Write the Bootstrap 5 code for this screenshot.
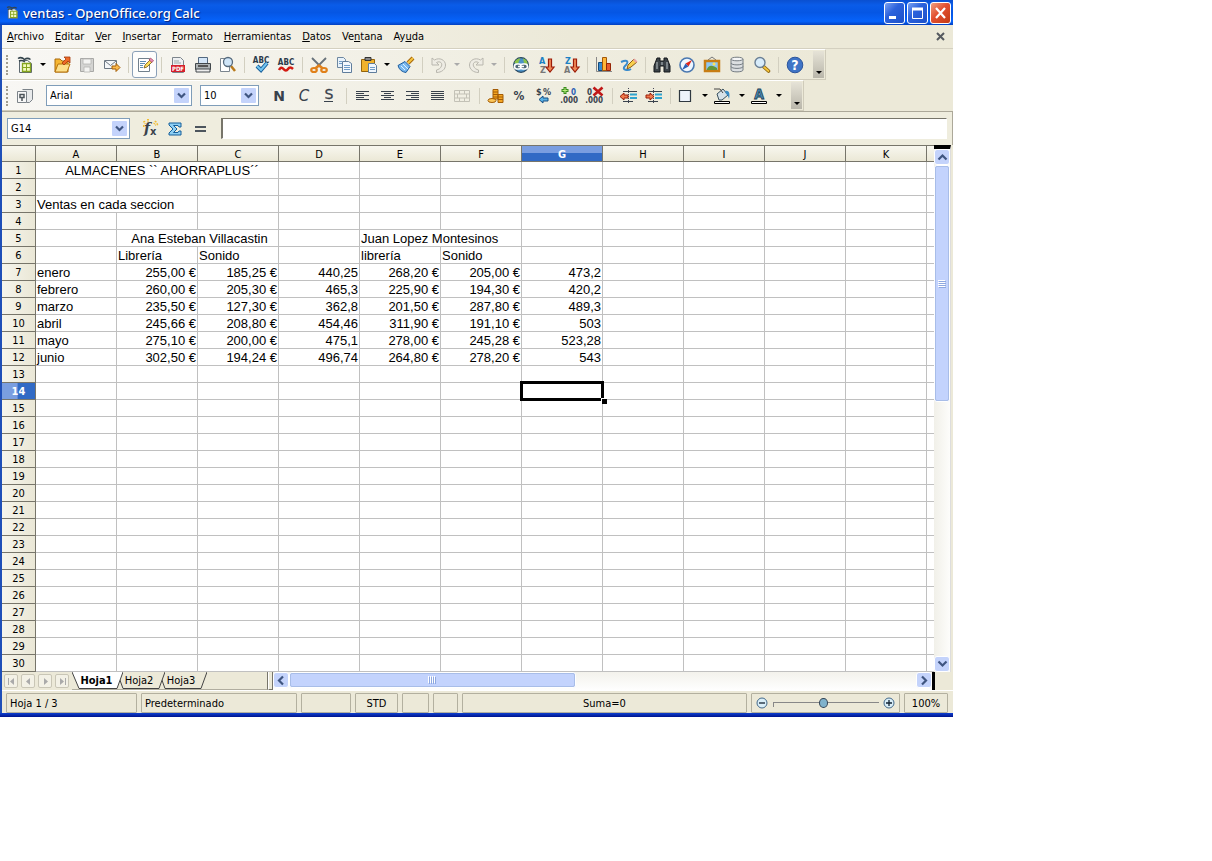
<!DOCTYPE html>
<html lang="es">
<head>
<meta charset="utf-8">
<meta name="viewport" content="width=device-width, initial-scale=1">
<title>ventas - OpenOffice.org Calc</title>
<link href="https://cdn.jsdelivr.net/npm/bootstrap@5.3.0/dist/css/bootstrap.min.css" rel="stylesheet">
<style>
:root{--face:#ece9d8;--ui:"DejaVu Sans Condensed","DejaVu Sans",sans-serif}
body{background:#fff;font-family:var(--ui);font-size:11px;line-height:16px;color:#000}
button,input,select{font:inherit;color:inherit}
button{background:none;border:0;padding:0}
.app{width:calc(100% - 259px);background:var(--face);border-left:2px solid #1f4fb8}
.titlebar{height:25px;margin-left:-2px;padding:0 2px 0 4px;background:linear-gradient(#0a4fd0,#0a5ce8 20%,#0556e4 50%,#0663fb 85%,#0340c0);color:#fff}
.titlebar h1{font:500 13px/24px "Noto Sans","Open Sans",sans-serif;text-shadow:1px 1px 1px #0a1f70;margin:0 0 0 2px}
.winbtns{gap:2px}
.winbtn{width:21px;height:22px;border:1px solid #fff;border-radius:3px;background:linear-gradient(135deg,#7ba2f3,#2c62dc 40%,#1c50c8)}
.winbtn.close-win{background:linear-gradient(135deg,#f0a080,#e25030 45%,#c33a14)}
.winbtn svg{display:block}
.menubar{height:24px;background:linear-gradient(90deg,#f8f7f3,var(--face) 60%);border-bottom:1px solid #d4d0c0;padding:0 6px 0 5px}
.menubar a{color:#000;text-decoration:none}
.menubar u{text-underline-offset:1px}
.menu-items{gap:11px}
.tools{height:31px;width:max-content;background:linear-gradient(90deg,#f8f7f4,#f0eee2 60%,var(--face));border-right:1px solid #cfcbba;border-bottom:1px solid #cfcbba;border-top:1px solid #fff}
.grip{width:10px;height:20px;border-left:2px dotted #a09d90;margin-left:4px;margin-right:-4px}
.tb{width:25px;height:27px;display:flex;align-items:center;justify-content:center;flex:none}
.tb svg{width:22px;height:22px;display:block}
.tb.on{border:1px solid #8aa0b8;border-radius:3px;background:#fdfdfc}
.dd{width:12px;height:27px;display:flex;align-items:center;justify-content:center;flex:none}
.dd::after,.more::after{content:"";border:3px solid transparent;border-top-color:#000;border-bottom:0}
.dd:disabled::after{border-top-color:#aaa}
.sep{width:8px;height:16px;flex:none;background:linear-gradient(#d2cfc0,#d2cfc0) 4px 0/1px 100% no-repeat}
.more{width:11px;height:27px;margin-left:6px;margin-right:1px;background:linear-gradient(#e6e3d7,#b9b6aa);display:flex;align-items:end;justify-content:center;padding-bottom:4px}
.pick{position:relative;height:21px;background:#fff;border:1px solid #7f9db9}
.pick select,.pick input{appearance:none;width:100%;height:19px;border:0;background:transparent;padding:0 20px 0 3px;outline:0;display:block}
.pick svg{position:absolute;right:2px;top:2px;pointer-events:none}
.fontpick{width:146px;margin-left:9px}.sizepick{width:59px;margin:0 8px}.cellpick{width:123px;margin-right:8px}
.formula{height:34px;padding:0 5px;border-top:1px solid #aca899;background:#efedde;border-right:1px solid #aca899}
.entry{height:21px;margin-left:8px;background:#fff;border:1px solid #fff;border-top:1px solid #77756a;border-left:2px solid #77756a;outline:0;min-width:0}
.grid{table-layout:fixed;width:100%;border-collapse:separate;border-spacing:0;background:#fff}
.grid th{font-weight:400;text-align:center;background:linear-gradient(#f8f7ef,#ebe8d6);border-right:1px solid #77756a;border-bottom:1px solid #77756a;height:17px}
.grid thead th{border-top:1px solid #77756a;line-height:13px;padding:2px 0 0}
.grid tbody th{background:linear-gradient(90deg,#f6f5ec,#eae7d6);line-height:14px;padding:2px 0 0}
.grid thead th.cur{background:linear-gradient(#7a9ee0 50%,#316ac5 50%);color:#fff;font-weight:700}
.grid tbody th.cur{background:linear-gradient(90deg,#7a9ee0 45%,#316ac5 50%);color:#fff;font-weight:700}
.grid td{font:13px/14px "Liberation Sans",Arial,sans-serif;height:17px;padding:2px 1px 0;border-right:1px solid #c0c0c0;border-bottom:1px solid #c0c0c0;white-space:nowrap}
.grid tr>:last-child{border-right:0}
.grid .ps-heading{padding-left:11px}.grid .ps-name{padding-left:5px}
.c-head{width:34px}.c-data{width:81px}
.cursor{position:relative}
.cursor::before{content:"";position:absolute;inset:-2px;border:3px solid #000}
.cursor::after{content:"";position:absolute;right:-5px;bottom:-5px;width:6px;height:6px;background:#000;border:solid #fff;border-width:1px 0 0 1px}
.vscroll{width:17px;background:linear-gradient(90deg,#f1f0e9,#fdfdfb);border-top:4px solid #000;border-right:1px solid #ddd;margin-right:2px}
.arrow{width:16px;height:16px;flex:none;border:1px solid #fff;border-radius:3px;background:#c4d3fb;display:flex;align-items:center;justify-content:center}
.thumb{border:1px solid #fff;outline:1px solid #a8bde8;outline-offset:-2px;border-radius:3px;background:#c3d3fd;display:flex;align-items:center;justify-content:center}
.vscroll .thumb{height:237px;width:16px}
.hscroll{background:linear-gradient(#f3f2ec,#fefefe)}
.hscroll .thumb{width:43.5%;height:16px}
.strip{height:18px}
.navs{width:70px;padding:2px 0 0 2px;gap:3px}
.stop{width:21px;border-left:3px solid #000;flex:none}
.nb{width:14px;height:14px;border:1px solid #c9c6b6;border-radius:2px;background:#f3f1e6;display:flex;align-items:center;justify-content:center}
.sheets{width:196px;border-right:1px solid #77756a;border-bottom:1px solid #b0ad9f}
.sheet{position:relative;width:48px;height:17px;margin-right:-6px;line-height:17px;padding-right:4px;flex:none}
.sheet svg{position:absolute;left:0;top:0;width:100%;height:17px}
.sheet span{position:relative}
.sheet:first-child{width:51px;font-weight:700;z-index:3;padding-right:2px}
.sheet:nth-child(2){z-index:2}
.splitter{width:5px;border:1px solid #77756a;border-top:0;border-left-color:#fff;background:var(--face)}
.statusbar{height:23px;padding:2px 5px 0 4px;gap:4px;border-top:1px solid #fff}
.field{height:20px;border:1px solid #b3b09f;border-radius:1px;padding:1px 3px 0;line-height:18px;white-space:nowrap;flex:none}
.w131{width:131px}.w156{width:156px}.w50{width:50px}.w43{width:43px}.w27{width:27px}.w25{width:25px}.w149{width:149px}.w44{width:44px}
.zoom{appearance:none;height:12px;min-width:0;width:106px;background:linear-gradient(#888,#888) 0 5px/100% 1px no-repeat,linear-gradient(#888,#888) 0 5px/1px 5px no-repeat}
.zoom::-webkit-slider-thumb{appearance:none;width:9px;height:10px;border-radius:50%;border:1px solid #345;background:#7fb2cc}
.bottom-edge{height:4px;margin-left:-2px;background:linear-gradient(#0d3fd0,#00138c)}
.t{font-family:var(--ui);font-weight:700}
</style>
</head>
<body>
<svg width="0" height="0" class="position-absolute" aria-hidden="true">
<defs>
<symbol id="chev" viewBox="0 0 15 15"><rect width="15" height="15" rx="1" fill="#c4d3fb"/><path d="M4 5.500 7.500 9 11 5.500" fill="none" stroke="#3f5580" stroke-width="2.200"/></symbol>
<symbol id="calc" viewBox="0 0 22 22"><path d="M5.500 6.500h8l4 3v9h-12z" fill="#f4f6f6" stroke="#5d6870"/><path d="M4 4.500c3-2 5-.5 6.500 1 2-1.500 4-1.500 6 0M5 7c2-1 4-.5 6 1" fill="none" stroke="#34444c" stroke-width="1.500"/><path d="M8.500 9.500h8v8h-8z" fill="#f3fac0" stroke="#86a51f" stroke-width="1.300"/><path d="M8.500 13.500h8M12.500 9.500v8" stroke="#86a51f"/></symbol>
<symbol id="glass" viewBox="0 0 22 22"><path d="m13 13 4.500 4" stroke="#8b6510" stroke-width="3.600" stroke-linecap="round"/><path d="m13 13 4.500 4" stroke="#f4c33c" stroke-width="1.800" stroke-linecap="round"/><circle cx="9" cy="8.500" r="5" fill="#d8ecfb" stroke="#6a7f95" stroke-width="1.400"/></symbol>
<symbol id="undo" viewBox="0 0 22 22"><path d="M4 4v7h7L8.500 8.500c4-2 6 1 5 3.500s-3 3.500-5 4v2.500c5 0 9-3 9-7.500 0-5-6-8-11-5z" fill="#eeece4" stroke="#b9b7ae"/></symbol>
<symbol id="indent" viewBox="0 0 22 22"><path d="M10.500 3v16" stroke="#445" stroke-dasharray="1 1"/><path d="M5 6.500h14M5 16.500h10" stroke="#39424c"/><path d="M12 9.500h7M12 13h7" stroke="#2fa4cf" stroke-width="2"/></symbol>
<symbol id="down" viewBox="0 0 22 22"><path d="M13.500 5h3v8H19l-4 5-4-5h2.500z" fill="#f08a58" stroke="#9c1c08" stroke-width="1.200"/></symbol>
</defs>
</svg>

<main class="app">
<header class="titlebar d-flex align-items-center">
  <svg width="17" height="17"><use href="#calc"/></svg>
  <h1 class="flex-grow-1">ventas - OpenOffice.org Calc</h1>
  <div class="winbtns d-flex">
    <button class="winbtn" aria-label="Minimizar"><svg width="19" height="20"><path d="M4 14.500h7" stroke="#fff" stroke-width="3"/></svg></button>
    <button class="winbtn" aria-label="Maximizar"><svg width="19" height="20"><path d="M4.500 6v9.500h10V6" fill="none" stroke="#fff"/><path d="M4 6h11" stroke="#fff" stroke-width="3"/></svg></button>
    <button class="winbtn close-win" aria-label="Cerrar"><svg width="19" height="20"><path d="m5 5 9 10M14 5 5 15" stroke="#fff" stroke-width="2.200"/></svg></button>
  </div>
</header>

<nav class="menubar d-flex align-items-center" aria-label="Menú">
  <div class="d-flex flex-grow-1 menu-items">
  <a href="#"><u>A</u>rchivo</a><a href="#"><u>E</u>ditar</a><a href="#"><u>V</u>er</a><a href="#"><u>I</u>nsertar</a><a href="#"><u>F</u>ormato</a><a href="#"><u>H</u>erramientas</a><a href="#"><u>D</u>atos</a><a href="#">Ve<u>n</u>tana</a><a href="#">Ay<u>u</u>da</a>
  </div>
  <button aria-label="Cerrar documento"><svg width="12" height="12" class="d-block"><path d="m2 2 7 7M9 2 2 9" stroke="#55595f" stroke-width="2"/></svg></button>
</nav>

<div class="tools d-flex align-items-center" role="toolbar" aria-label="Estándar">
  <span class="grip"></span>
  <button class="tb" aria-label="Nuevo"><svg><use href="#calc"/></svg></button><button class="dd" aria-label="Tipos"></button>
  <button class="tb" aria-label="Abrir"><svg viewBox="0 0 22 22"><path d="M4 18V5h5l2 2h6v11z" fill="#f7b733" stroke="#a8690a"/><path d="m4 18 3-8h12l-3 8z" fill="#fde08a" stroke="#b8740e"/><path d="M13 3h6v6l-2-2-4 4-2-2 4-4z" fill="#ee6a28" stroke="#a33a0a" stroke-width=".8"/></svg></button>
  <button class="tb" aria-label="Guardar" disabled><svg viewBox="0 0 22 22"><path d="M4.500 4.500h13v13h-13z" fill="#d4d4d2" stroke="#a8a8a6"/><path d="M7 5h8v5H7zM8 13h6v5H8z" fill="#f4f4f2" stroke="#b5b5b3" stroke-width=".8"/></svg></button>
  <button class="tb" aria-label="Correo"><svg viewBox="0 0 22 22"><path d="M3.500 6.500h12v8h-12z" fill="#f4f6f8" stroke="#6c7782"/><path d="m4 7 5.500 4.500L15 7" fill="none" stroke="#6c7782"/><path d="M11 12h4v-2.500l4 4-4 4V15h-4z" fill="#fbb94b" stroke="#a35d06"/></svg></button>
  <span class="sep"></span>
  <button class="tb on" aria-label="Editar archivo"><svg viewBox="0 0 22 22"><path d="M4.500 4.500h11v13h-11z" fill="#fff" stroke="#71808c"/><path d="M6 7.500h6M6 9.500h5M6 11.500h3M6 13.500h3" stroke="#5c8cb5"/><path d="m10 14 1-3 5-5 2 2-5 5z" fill="#f9dd59" stroke="#77551c" stroke-width=".8"/><path d="m15 6 1.500-2 3 2.500L18 8.500z" fill="#e58cb8" stroke="#934" stroke-width=".6"/></svg></button>
  <span class="sep"></span>
  <button class="tb" aria-label="Exportar PDF"><svg viewBox="0 0 22 22"><path d="M5.500 3.500h8l3 3v12h-11z" fill="#eef0f2" stroke="#7d858c"/><path d="M7 7h5M7 9h7" stroke="#9aa"/><path d="M4 11h14v7H4z" fill="#d6202c"/><text x="11" y="17" font-size="6" class="t" text-anchor="middle" fill="#fff">PDF</text></svg></button>
  <button class="tb" aria-label="Imprimir"><svg viewBox="0 0 22 22"><path d="M6.500 3.500h9v6h-9z" fill="#d4e6f8" stroke="#536880"/><path d="M3.500 9.500h15v6h-15z" fill="#aeb4b6" stroke="#42484c"/><path d="M4 15h14v3H4z" fill="#eee" stroke="#42484c"/><path d="M6 12h10" stroke="#555" stroke-width="2"/></svg></button>
  <button class="tb" aria-label="Vista preliminar"><svg viewBox="0 0 22 22"><path d="M3.500 4.500h9v13h-9z" fill="#fff" stroke="#7b858e"/><path d="m14 12 4 5" stroke="#b97a1c" stroke-width="2.500"/><circle cx="11" cy="8" r="4.500" fill="#cfe5f8" stroke="#55697c" stroke-width="1.300"/></svg></button>
  <span class="sep"></span>
  <button class="tb" aria-label="Ortografía"><svg viewBox="0 0 22 22"><text x="11" y="9" font-size="8" class="t" text-anchor="middle" fill="#2b3b4b">ABC</text><path d="m7 12 4 4 6-7" fill="none" stroke="#195f9b" stroke-width="4"/><path d="m7 12 4 4 6-7" fill="none" stroke="#72c6f2" stroke-width="2"/></svg></button>
  <button class="tb" aria-label="Revisión automática"><svg viewBox="0 0 22 22"><text x="11" y="11" font-size="8" class="t" text-anchor="middle" fill="#2b3b4b">ABC</text><path d="M4 16q2-4 4.500-1t4.500 0 5 0" fill="none" stroke="#d31b12" stroke-width="2.500"/></svg></button>
  <span class="sep"></span>
  <button class="tb" aria-label="Cortar"><svg viewBox="0 0 22 22"><path d="m4 4 9 9M18 4l-9 9" stroke="#68727a" stroke-width="1.800"/><ellipse cx="6" cy="16" rx="2.800" ry="2" fill="none" stroke="#e0801a" stroke-width="2.200"/><ellipse cx="16" cy="16" rx="2.800" ry="2" fill="none" stroke="#e0801a" stroke-width="2.200"/><path d="m7 14.500 4-3 4 3" fill="none" stroke="#e0801a" stroke-width="2.400"/></svg></button>
  <button class="tb" aria-label="Copiar"><svg viewBox="0 0 22 22"><path d="M4.500 3.500h6l2 2v8h-8z" fill="#e8f2fb" stroke="#6d87a0"/><path d="M9.500 7.500h6l3 2v9h-9z" fill="#f3f8fd" stroke="#5f7d9c"/><path d="M6 7.500h3M6 9.500h3M11 11.500h6M11 13.500h6M11 15.500h6" stroke="#6f9cc8"/></svg></button>
  <button class="tb" aria-label="Pegar"><svg viewBox="0 0 22 22"><path d="M3.500 5.500h13v12h-13z" fill="#f0b22c" stroke="#94640b"/><path d="M7 3.500h6v3H7z" fill="#888" stroke="#333"/><path d="M10.500 9.500h6l2 2v7h-8z" fill="#eff6fd" stroke="#5f7d9c"/><path d="M12 13.500h5M12 15.500h5" stroke="#6f9cc8"/></svg></button><button class="dd" aria-label="Opciones de pegado"></button>
  <button class="tb" aria-label="Pincel de formato"><svg viewBox="0 0 22 22"><path d="m13 9 5-5" stroke="#a8690a" stroke-width="4"/><path d="m13 9 5-5" stroke="#f6c440" stroke-width="2"/><path d="m3 11.500 7-4 5 5-4 6c-4-.5-7-3-8-7z" fill="#7ab8ee" stroke="#1d5c9d"/><path d="m6 12 4 4M8 10l5 5" stroke="#dff1ff"/></svg></button>
  <span class="sep"></span>
  <button class="tb" aria-label="Deshacer" disabled><svg><use href="#undo"/></svg></button><button class="dd" aria-label="Lista deshacer" disabled></button>
  <button class="tb" aria-label="Restaurar" disabled><svg viewBox="0 0 22 22"><path d="M18 4v7h-7l2.500-2.500c-4-2-6 1-5 3.500s3 3.500 5 4v2.500c-5 0-9-3-9-7.500 0-5 6-8 11-5z" fill="#eeece4" stroke="#b9b7ae"/></svg></button><button class="dd" aria-label="Lista restaurar" disabled></button>
  <span class="sep"></span>
  <button class="tb" aria-label="Hiperenlace"><svg viewBox="0 0 22 22"><circle cx="11" cy="11" r="7.300" fill="#4c93c8" stroke="#28465e" stroke-width="1.300"/><path d="M4.500 9c0-3 4-5 6-4.500L9 7l-1 3zM13 4.500c3 .5 5 3 4.500 6L14 9z" fill="#8bc34a"/><rect x="4.500" y="10" width="7" height="5" rx="2.500" fill="#506878" stroke="#fff" stroke-width="1.600"/><rect x="10.500" y="10" width="7" height="5" rx="2.500" fill="#506878" stroke="#fff" stroke-width="1.600"/><path d="M8 12.500h6" stroke="#fff" stroke-width="1.500"/></svg></button>
  <button class="tb" aria-label="Orden ascendente"><svg viewBox="0 0 22 22"><text x="4" y="10" font-size="9" class="t" fill="#1c82c4">A</text><text x="5" y="19" font-size="9" class="t" fill="#777">Z</text><use href="#down"/></svg></button>
  <button class="tb" aria-label="Orden descendente"><svg viewBox="0 0 22 22"><text x="5" y="10" font-size="9" class="t" fill="#1c82c4">Z</text><text x="4" y="19" font-size="9" class="t" fill="#777">A</text><use href="#down"/></svg></button>
  <span class="sep"></span>
  <button class="tb" aria-label="Gráfico"><svg viewBox="0 0 22 22"><path d="M3.500 3v14.500H19" fill="none" stroke="#888"/><path d="M5.500 8.500h4v8h-4z" fill="#3689cf" stroke="#124a7c"/><path d="M9.500 3.500h4v13h-4z" fill="#ffb638" stroke="#a35808"/><path d="M13.500 9.500h4v7h-4z" fill="#e65a2c" stroke="#952506"/></svg></button>
  <button class="tb" aria-label="Dibujo"><svg viewBox="0 0 22 22"><path d="M3 8c7-3 8 0 4 4s3 5 6 3" fill="none" stroke="#3a8ccd" stroke-width="2"/><path d="m9 15 1-4 6-6 3 3-6 5z" fill="#f8cf4d" stroke="#8c5c15"/><path d="m15 6 1.500-1.500 3 3L18 9z" fill="#e9a2a2"/></svg></button>
  <span class="sep"></span>
  <button class="tb" aria-label="Buscar"><svg viewBox="0 0 22 22"><path d="M6 4h3v3h4V4h3l3 8v6h-6v-6H9v6H3v-6z" fill="#3b4247" stroke="#15191c"/><path d="M6 8v7M16 8v7M11 8v3" stroke="#939a9f" stroke-width="1.500"/></svg></button>
  <button class="tb" aria-label="Navegador"><svg viewBox="0 0 22 22"><circle cx="11" cy="11" r="7" fill="#eef6ff" stroke="#4a78b0" stroke-width="1.600"/><path d="m16 6-3.500 6.500-3-3z" fill="#e1261c"/><path d="m6 16 3.500-6.500 3 3z" fill="#2c5fb5"/></svg></button>
  <button class="tb" aria-label="Galería"><svg viewBox="0 0 22 22"><path d="m7 6 4-3 4 3" fill="none" stroke="#777"/><path d="M4 7h14v10H4z" fill="#8ec8f4" stroke="#c77d14" stroke-width="2.500"/><path d="M6 15c2-4 5-4 10-1v2H6z" fill="#63963a"/><circle cx="13" cy="10" r="1.500" fill="#ffe35a"/></svg></button>
  <button class="tb" aria-label="Orígenes de datos"><svg viewBox="0 0 22 22"><path d="M5 5v11c0 2.500 12 2.500 12 0V5" fill="#dcdfe1" stroke="#757c82"/><ellipse cx="11" cy="5" rx="6" ry="1.800" fill="#f5f6f7" stroke="#757c82"/><path d="M5 9c0 2.500 12 2.500 12 0M5 12.500c0 2.500 12 2.500 12 0" fill="none" stroke="#757c82"/></svg></button>
  <button class="tb" aria-label="Escala"><svg><use href="#glass"/></svg></button>
  <span class="sep"></span>
  <button class="tb" aria-label="Ayuda"><svg viewBox="0 0 22 22"><circle cx="11" cy="11" r="7.800" fill="#3f74c6" stroke="#2c559c"/><text x="11" y="16" font-size="14" class="t" text-anchor="middle" fill="#fff">?</text></svg></button>
  <button class="more" aria-label="Más botones"></button>
</div>

<div class="tools d-flex align-items-center" role="toolbar" aria-label="Formato">
  <span class="grip"></span>
  <button class="tb" aria-label="Estilo y formato"><svg viewBox="0 0 22 22"><path d="M8.500 4.500h10v10l-3 3h-3" fill="#e8eaeb" stroke="#7c8389"/><path d="M3.500 6.500h9v11h-9z" fill="#f8f8f8" stroke="#7c8389"/><path d="M6 9.500h4v3H6zM8 12v4" stroke="#4c545a" fill="none" stroke-width="1.500"/></svg></button>
  <div class="pick fontpick"><select aria-label="Fuente"><option>Arial</option></select><svg width="15" height="15"><use href="#chev"/></svg></div>
  <div class="pick sizepick"><select aria-label="Tamaño"><option>10</option></select><svg width="15" height="15"><use href="#chev"/></svg></div>
  <button class="tb" aria-label="Negrita"><svg viewBox="0 0 22 22"><text x="10" y="16" font-size="14" font-family="DejaVu Sans" font-weight="700" text-anchor="middle" fill="#39424c">N</text></svg></button>
  <button class="tb" aria-label="Cursiva"><svg viewBox="0 0 22 22"><text x="10" y="16" font-size="15" font-style="italic" text-anchor="middle" font-family="DejaVu Sans" fill="#39424c">C</text></svg></button>
  <button class="tb" aria-label="Subrayado"><svg viewBox="0 0 22 22"><text x="10" y="14" font-size="14" text-anchor="middle" font-family="DejaVu Sans" fill="#39424c" stroke="#39424c" stroke-width=".3">S</text><path d="M5 16.500h9" stroke="#39424c"/></svg></button>
  <span class="sep"></span>
  <button class="tb" aria-label="Izquierda"><svg viewBox="0 0 22 22"><path d="M4 6.500h13M4 8.500h8M4 10.500h13M4 12.500h8M4 14.500h13" stroke="#39424c"/></svg></button>
  <button class="tb" aria-label="Centrado"><svg viewBox="0 0 22 22"><path d="M4 6.500h13M7 8.500h7M4 10.500h13M7 12.500h7M4 14.500h13" stroke="#39424c"/></svg></button>
  <button class="tb" aria-label="Derecha"><svg viewBox="0 0 22 22"><path d="M4 6.500h13M9 8.500h8M4 10.500h13M9 12.500h8M4 14.500h13" stroke="#39424c"/></svg></button>
  <button class="tb" aria-label="Justificado"><svg viewBox="0 0 22 22"><path d="M4 6.500h13M4 8.500h13M4 10.500h13M4 12.500h13M4 14.500h13" stroke="#39424c"/></svg></button>
  <button class="tb" aria-label="Combinar celdas" disabled><svg viewBox="0 0 22 22"><path d="M2.500 5.500h15v11h-15zM2.500 9h15M2.500 13h15M7.500 5.500V9M12.500 5.500V9M5.500 9v4M14.500 9v4M7.500 13v3.500M12.500 13v3.500" fill="none" stroke="#c3c1b6"/></svg></button>
  <span class="sep"></span>
  <button class="tb" aria-label="Moneda"><svg viewBox="0 0 22 22"><path d="M8 4.500h5V14H8zM13 9.500h5v8h-5z" fill="#f5a623" stroke="#a35c06"/><path d="M8 7h5M8 9.500h5M8 12h5M13 12h5M13 14.500h5" stroke="#a35c06"/><ellipse cx="7" cy="15.500" rx="4" ry="2" fill="#fcc75a" stroke="#a35c06"/></svg></button>
  <button class="tb" aria-label="Porcentaje"><svg viewBox="0 0 22 22"><text x="9" y="15" font-size="12" class="t" text-anchor="middle" fill="#39424c">%</text></svg></button>
  <button class="tb" aria-label="Formato estándar"><svg viewBox="0 0 22 22"><text x="1" y="10" font-size="9" class="t" fill="#39424c">$</text><text x="8" y="10" font-size="9" class="t" fill="#39424c">%</text><path d="M4 14.500 8 11v2h5v3H8v2z" fill="#5ab2e6" stroke="#154f84"/></svg></button>
  <button class="tb" aria-label="Añadir decimal"><svg viewBox="0 0 22 22"><path d="M5 2v7M1.500 5.500h7" stroke="#3a8c1e" stroke-width="3"/><path d="M5 3v5M2.500 5.500h5" stroke="#b9f07c"/><text x="11" y="10" font-size="8" class="t" fill="#2c5fb5">0</text><text x="18" y="18" font-size="8" class="t" text-anchor="end" fill="#39424c">.000</text></svg></button>
  <button class="tb" aria-label="Quitar decimal"><svg viewBox="0 0 22 22"><text x="2" y="10" font-size="8" class="t" fill="#39424c">0</text><text x="18" y="18" font-size="8" class="t" text-anchor="end" fill="#39424c">.000</text><path d="m8.500 2.500 9 8M17.500 2.500l-9 8" stroke="#c01818" stroke-width="2.600"/></svg></button>
  <span class="sep"></span>
  <button class="tb" aria-label="Reducir sangría"><svg viewBox="0 0 22 22"><use href="#indent"/><path d="m2 11.500 4-3.500v2h4v3H6v2z" fill="#f07a4c" stroke="#9c1c08"/></svg></button>
  <button class="tb" aria-label="Aumentar sangría"><svg viewBox="0 0 22 22"><use href="#indent"/><path d="M11 11.500 7 8v2H3v3h4v2z" fill="#f07a4c" stroke="#9c1c08"/></svg></button>
  <span class="sep"></span>
  <button class="tb" aria-label="Borde"><svg viewBox="0 0 22 22"><path d="M3.500 5.500h11v11h-11z" fill="#eef3fa" stroke="#2f3840" stroke-width="1.200"/></svg></button><button class="dd" aria-label="Bordes"></button>
  <button class="tb" aria-label="Color de fondo"><svg viewBox="0 0 22 22"><path d="m4 9 6-5 5 6-6 5H6z" fill="#d6e2e8" stroke="#39505e"/><path d="M1 4h6l3 4" fill="none" stroke="#444"/><path d="M12 6c5-1 5 4 4 8-1-3-1-4-3-5z" fill="#3a8cc4"/><path d="M1.500 16.500h15v2h-15z" fill="#fff" stroke="#000"/></svg></button><button class="dd" aria-label="Colores de fondo"></button>
  <button class="tb" aria-label="Color de fuente"><svg viewBox="0 0 22 22"><text x="9" y="14" font-size="14" class="t" text-anchor="middle" fill="#4b8fb8" stroke="#1f3f58" stroke-width=".8">A</text><path d="M1.500 16.500h15v2h-15z" fill="#fff" stroke="#000"/></svg></button><button class="dd" aria-label="Colores de fuente"></button>
  <button class="more" aria-label="Más botones"></button>
</div>

<div class="formula d-flex align-items-center">
  <div class="pick cellpick"><input value="G14" aria-label="Celda"><svg width="15" height="15"><use href="#chev"/></svg></div>
  <button class="tb" aria-label="Asistente de funciones"><svg viewBox="0 0 22 22"><path d="m4 3 1 3M8 1v3M16 3l-2 3M18 6l-3 1M3 8h3" stroke="#f1bd35" stroke-width="2" stroke-dasharray="1.500 1"/><text x="4" y="15" font-size="14" font-style="italic" font-family="DejaVu Serif" font-weight="700" fill="#39424c">f</text><text x="10" y="17" font-size="11" class="t" fill="#39424c">x</text></svg></button>
  <button class="tb" aria-label="Suma"><svg viewBox="0 0 22 22"><path d="M4 5h12v4h-2l-1-1.500H8.500L12 11l-3.500 3.500H13l1-1.500h2v4H4v-2l4-4-4-4z" fill="#8fd0f4" stroke="#155f9a"/></svg></button>
  <button class="tb" aria-label="Función"><svg viewBox="0 0 22 22"><path d="M5 9h11M5 13h11" stroke="#4c555d" stroke-width="2"/></svg></button>
  <input class="entry flex-grow-1" aria-label="Línea de entrada">
</div>

<div class="d-flex">
  <div class="flex-grow-1 overflow-hidden">
    <table class="grid"><colgroup id="cols"></colgroup><thead id="head"></thead><tbody id="rows"></tbody></table>
  </div>
  <div class="vscroll d-flex flex-column">
    <button class="arrow" aria-label="Subir"><svg width="11" height="8"><path d="M1.500 6.500 5.500 2.500l4 4" fill="none" stroke="#3f5580" stroke-width="2.200"/></svg></button>
    <div class="thumb"><svg width="8" height="8"><path d="M0 .5h7M0 2.500h7M0 4.500h7M0 6.500h7" stroke="#fff"/><path d="M1 1.500h7M1 3.500h7M1 5.500h7M1 7.500h7" stroke="#8ea8e0"/></svg></div>
    <button class="arrow mt-auto" aria-label="Bajar"><svg width="11" height="8"><path d="M1.500 1.500 5.500 5.500l4-4" fill="none" stroke="#3f5580" stroke-width="2.200"/></svg></button>
  </div>
</div>

<div class="strip d-flex">
  <div class="d-flex navs">
    <button class="nb" aria-label="Primera hoja"><svg width="9" height="9"><path d="M1.500 1v7" stroke="#aaa"/><path d="M7 1 3 4.500 7 8z" fill="#aaa"/></svg></button>
    <button class="nb" aria-label="Hoja anterior"><svg width="9" height="9"><path d="M6 1 2 4.500 6 8z" fill="#aaa"/></svg></button>
    <button class="nb" aria-label="Hoja siguiente"><svg width="9" height="9"><path d="m3 1 4 3.500L3 8z" fill="#aaa"/></svg></button>
    <button class="nb" aria-label="Última hoja"><svg width="9" height="9"><path d="M7.500 1v7" stroke="#aaa"/><path d="m2 1 4 3.500L2 8z" fill="#aaa"/></svg></button>
  </div>
  <div class="sheets d-flex">
    <button class="sheet"><svg viewBox="0 0 51 17"><path d="M0 0 7 16.500H45L51 0" fill="#fff" stroke="#444"/></svg><span>Hoja1</span></button>
    <button class="sheet"><svg viewBox="0 0 48 17"><path d="M0 0 6 16.500H42L48 0" fill="#ece9d8" stroke="#444"/></svg><span>Hoja2</span></button>
    <button class="sheet"><svg viewBox="0 0 48 17"><path d="M0 0 6 16.500H42L48 0" fill="#ece9d8" stroke="#444"/></svg><span>Hoja3</span></button>
  </div>
  <div class="splitter"></div>
  <div class="hscroll d-flex flex-grow-1">
    <button class="arrow" aria-label="Izquierda"><svg width="8" height="11"><path d="m6 1.500-4 4 4 4" fill="none" stroke="#3f5580" stroke-width="2.200"/></svg></button>
    <div class="thumb"><svg width="8" height="8"><path d="M.5 0v7M2.500 0v7M4.500 0v7M6.500 0v7" stroke="#fff"/><path d="M1.500 1v7M3.500 1v7M5.500 1v7M7.500 1v7" stroke="#8ea8e0"/></svg></div>
    <button class="arrow ms-auto" aria-label="Derecha"><svg width="8" height="11"><path d="m2 1.500 4 4-4 4" fill="none" stroke="#3f5580" stroke-width="2.200"/></svg></button>
  </div>
  <div class="stop"></div>
</div>

<footer class="statusbar d-flex">
  <div class="field w131">Hoja 1 / 3</div><div class="field w156">Predeterminado</div><div class="field w50"></div><div class="field w43 text-center">STD</div><div class="field w27"></div><div class="field w25"></div>
  <div class="field flex-fill text-center">Suma=0</div>
  <div class="field w149 d-flex align-items-center justify-content-between px-1 pt-0">
    <button aria-label="Reducir"><svg width="12" height="12" class="d-block"><circle cx="6" cy="6" r="5" fill="#d9eef8" stroke="#44698a"/><path d="M3 6h6" stroke="#123" stroke-width="1.300"/></svg></button>
    <input type="range" class="zoom" aria-label="Escala" value="48">
    <button aria-label="Aumentar"><svg width="12" height="12" class="d-block"><circle cx="6" cy="6" r="5" fill="#d9eef8" stroke="#44698a"/><path d="M3 6h6M6 3v6" stroke="#123" stroke-width="1.300"/></svg></button>
  </div>
  <div class="field w44 text-center">100%</div>
</footer>
<div class="bottom-edge"></div>
</main>

<script src="https://cdn.jsdelivr.net/npm/bootstrap@5.3.0/dist/js/bootstrap.bundle.min.js"></script>
<script>
const letters = [...'ABCDEFGHIJK'];
// Row number -> { first column index: [text, class, colspan] }
const cells = {
  1: {0: ['ALMACENES `` AHORRAPLUS´´', 'text-center ps-heading', 3]},
  3: {0: ['Ventas en cada seccion', '', 2]},
  5: {1: ['Ana Esteban Villacastin', 'text-center ps-name', 2], 4: ['Juan Lopez Montesinos', '', 2]},
  6: {1: ['Librería'], 2: ['Sonido'], 4: ['librería'], 5: ['Sonido']}
};
const sales = [
  ['enero', '255,00 €', '185,25 €', '440,25', '268,20 €', '205,00 €', '473,2'],
  ['febrero', '260,00 €', '205,30 €', '465,3', '225,90 €', '194,30 €', '420,2'],
  ['marzo', '235,50 €', '127,30 €', '362,8', '201,50 €', '287,80 €', '489,3'],
  ['abril', '245,66 €', '208,80 €', '454,46', '311,90 €', '191,10 €', '503'],
  ['mayo', '275,10 €', '200,00 €', '475,1', '278,00 €', '245,28 €', '523,28'],
  ['junio', '302,50 €', '194,24 €', '496,74', '264,80 €', '278,20 €', '543']
];
sales.forEach((r, i) => { cells[7 + i] = Object.fromEntries(r.map((v, c) => [c, [v, c ? 'text-end' : '']])); });
cols.innerHTML = '<col class="c-head">' + letters.map(() => '<col class="c-data">').join('') + '<col>';
head.innerHTML = '<tr><th></th>' + letters.map(l => `<th scope="col"${l === 'G' ? ' class="cur"' : ''}>${l}</th>`).join('') + '<th></th></tr>';
let html = '';
for (let n = 1; n <= 30; n++) {
  html += `<tr><th scope="row"${n === 14 ? ' class="cur"' : ''}>${n}</th>`;
  for (let c = 0; c < 12;) {
    const [text = '', cls = '', span = 1] = (cells[n] || {})[c] || [];
    html += `<td class="${n === 14 && c === 6 ? 'cursor' : cls}" colspan="${span}">${text}</td>`;
    c += span;
  }
  html += '</tr>';
}
rows.innerHTML = html;
</script>
</body>
</html>
